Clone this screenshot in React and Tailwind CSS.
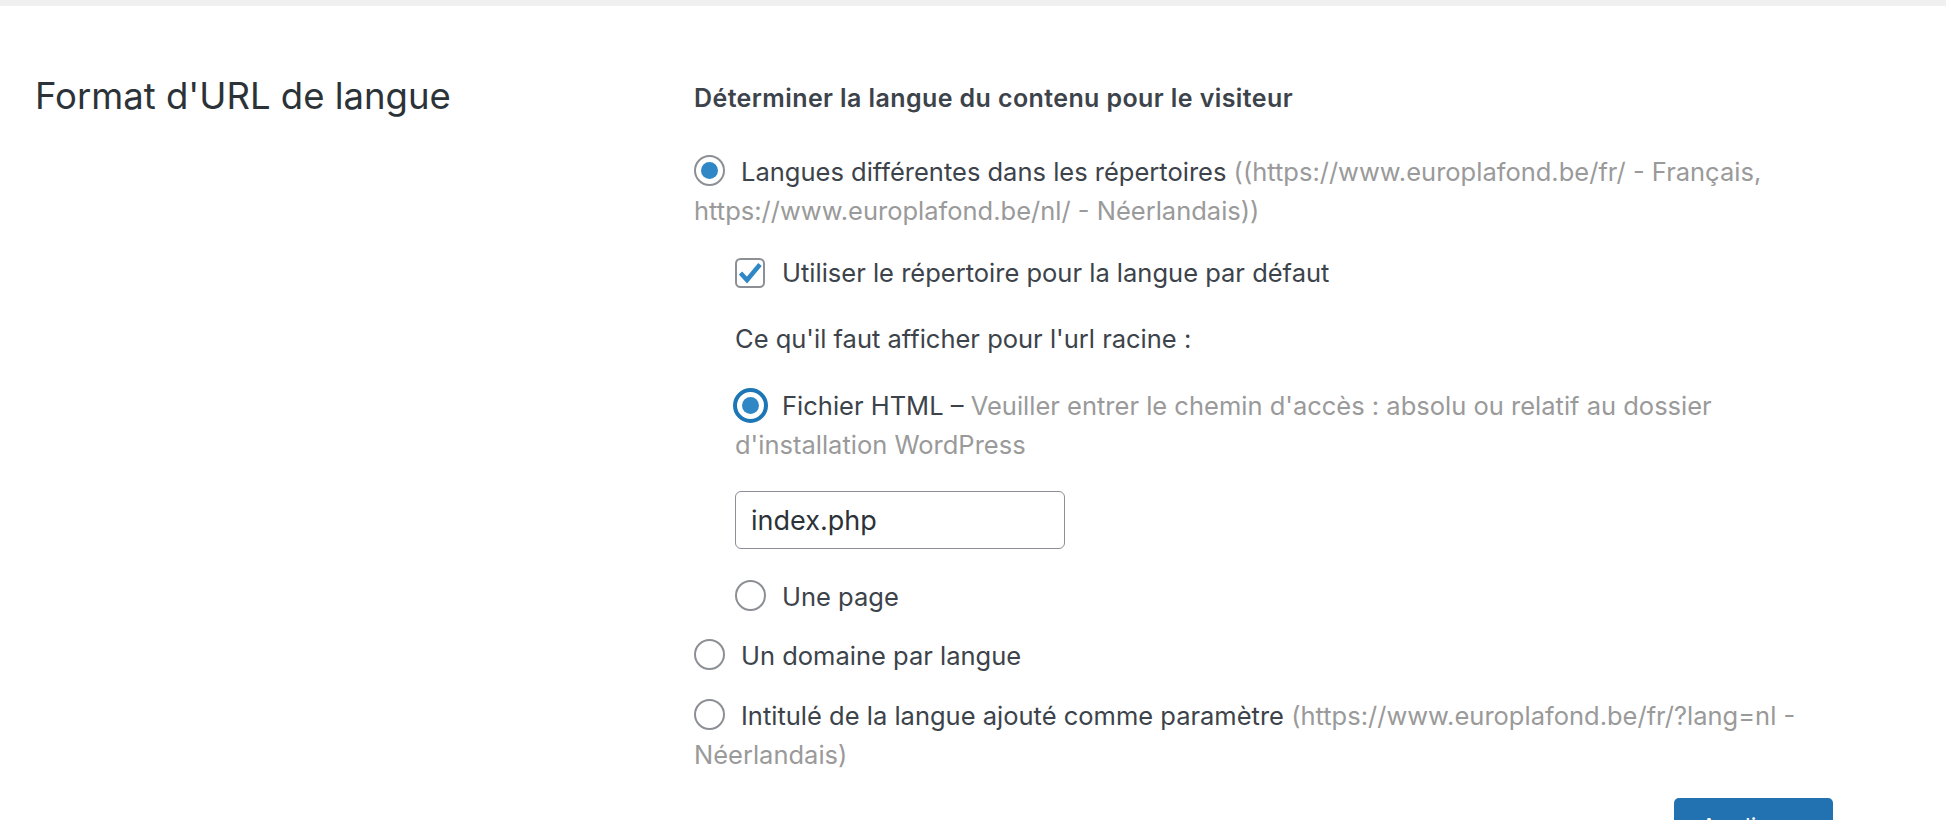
import React from "react";

function Radio({ variant }) {
  if (variant === "focus") {
    return (
      <svg width="35" height="35" viewBox="0 0 35 35" className="inline-block align-[-7.5px] ml-[-2px] mr-[14px]">
        <circle cx="17.5" cy="17.5" r="15.5" fill="white" stroke="#1d76b5" strokeWidth="4" />
        <circle cx="17.5" cy="17.5" r="8.5" fill="#2f88c5" />
      </svg>
    );
  }
  return (
    <svg width="31" height="31" viewBox="0 0 31 31" className="inline-block align-[-4.5px] mr-[16px]">
      <circle cx="15.5" cy="15.5" r="14.5" fill="white" stroke="#8c8f94" strokeWidth="2" />
      {variant === "checked" && <circle cx="15.5" cy="15.5" r="8.5" fill="#2f88c5" />}
    </svg>
  );
}

function Checkbox() {
  return (
    <svg width="30" height="30" viewBox="0 0 30 30" className="inline-block align-[-6px] mr-[17px]">
      <rect x="1" y="1" width="28" height="28" rx="4.5" fill="white" stroke="#8c8f94" strokeWidth="2" />
      <path d="M5.5 15 L12 22 L25 6.5" fill="none" stroke="#2f88c5" strokeWidth="4.5" strokeLinejoin="miter" />
    </svg>
  );
}

export default function App() {
  return (
    <div
      className="w-[1946px] h-[820px] overflow-hidden bg-white text-[#3c434a]"
      style={{ fontFamily: "Inter, 'Noto Sans', sans-serif" }}
    >
      <div className="h-[6px] bg-[#f0f0f1]" />
      <div className="flex">
        <div className="w-[694px] shrink-0 pl-[35px] pt-[67px]">
          <h2 className="text-[36.5px] leading-[46px] font-normal text-[#2c3338]">Format d'URL de langue</h2>
        </div>
        <div className="flex-1 pr-[113px] pt-[77px] text-[25.5px] leading-[39px]">
          <div className="text-[25px] leading-[30px] font-semibold tracking-[0.4px]">
            Déterminer la langue du contenu pour le visiteur
          </div>

          <div className="mt-[39px]">
            <Radio variant="checked" />
            Langues différentes dans les répertoires{" "}
            <span className="text-[#9a9a9a]">
              ((https://www.europlafond.be/fr/ - Français, https://www.europlafond.be/nl/ - Néerlandais))
            </span>
          </div>

          <div className="pl-[41px]">
            <div className="mt-[23px]">
              <Checkbox />
              Utiliser le répertoire pour la langue par défaut
            </div>
            <div className="mt-[27px]">Ce qu'il faut afficher pour l'url racine :</div>
            <div className="mt-[28px]">
              <Radio variant="focus" />
              Fichier HTML –{" "}
              <span className="text-[#9a9a9a]">
                Veuiller entrer le chemin d'accès : absolu ou relatif au dossier d'installation WordPress
              </span>
            </div>
            <input
              readOnly
              defaultValue="index.php"
              className="mt-[27px] block w-[330px] h-[58px] border-[1.5px] border-[#8c8f94] rounded-[6px] pl-[15px] text-[27px] text-[#2c3338] outline-none"
            />
            <div className="mt-[28px]">
              <Radio />
              Une page
            </div>
          </div>

          <div className="mt-[20px]">
            <Radio />
            Un domaine par langue
          </div>
          <div className="mt-[21px]">
            <Radio />
            Intitulé de la langue ajouté comme paramètre{" "}
            <span className="text-[#9a9a9a]">(https://www.europlafond.be/fr/?lang=nl - Néerlandais)</span>
          </div>

          <div className="flex justify-end mt-[24px]">
            <button className="w-[159px] h-[58px] rounded-[5px] bg-[#2271b1] text-white text-[23px] leading-[30px]">
              Appliquer
            </button>
          </div>
        </div>
      </div>
    </div>
  );
}
